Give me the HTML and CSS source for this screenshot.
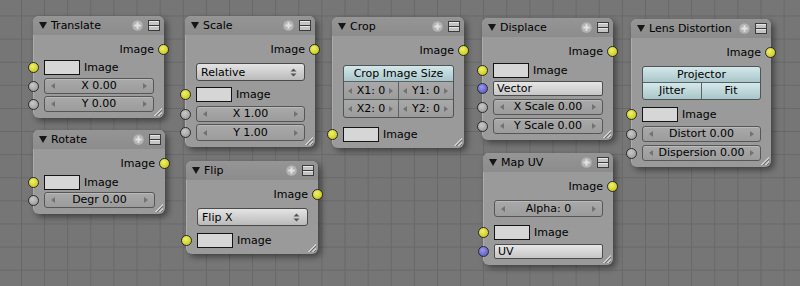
FILE: index.html
```html
<!DOCTYPE html>
<html lang="en">
<head>
    <meta charset="UTF-8">
    <title>Distort Nodes</title>
    <link rel="stylesheet" href="styles.css">
</head>
<body>
<div class="canvas">

    <!-- Translate -->
    <div class="node n-translate">
        <div class="node-head">
            <span class="tri"></span><span class="node-title">Translate</span>
            <span class="head-icons">
                <svg width="11" height="11" viewBox="0 0 11 11"><circle cx="5.5" cy="5.5" r="5.3" fill="#b3b3b3"/><path d="M5.5 2.3v6.4M2.3 5.5h6.4" stroke="#e2e2e2" stroke-width="2"/></svg>
                <svg width="12" height="11" viewBox="0 0 12 11"><rect x=".5" y=".5" width="11" height="10" fill="#c4c4c4" stroke="#3c3c3c"/><path d="M1 5.5h10" stroke="#3c3c3c"/><path d="M1 1.5h10M1 6.5h10" stroke="#e6e6e6"/></svg>
            </span>
        </div>
        <div class="node-body">
            <div class="row out">Image<i class="sock yel"></i></div>
            <div class="row in"><i class="sock yel"></i><span class="img-box"></span>Image</div>
            <div class="row in"><i class="sock gry"></i><div class="num spin">X 0.00</div></div>
            <div class="row in mt2"><i class="sock gry"></i><div class="num spin">Y 0.00</div></div>
        </div>
    </div>

    <!-- Rotate -->
    <div class="node n-rotate">
        <div class="node-head">
            <span class="tri"></span><span class="node-title">Rotate</span>
            <span class="head-icons">
                <svg width="11" height="11" viewBox="0 0 11 11"><circle cx="5.5" cy="5.5" r="5.3" fill="#b3b3b3"/><path d="M5.5 2.3v6.4M2.3 5.5h6.4" stroke="#e2e2e2" stroke-width="2"/></svg>
                <svg width="12" height="11" viewBox="0 0 12 11"><rect x=".5" y=".5" width="11" height="10" fill="#c4c4c4" stroke="#3c3c3c"/><path d="M1 5.5h10" stroke="#3c3c3c"/><path d="M1 1.5h10M1 6.5h10" stroke="#e6e6e6"/></svg>
            </span>
        </div>
        <div class="node-body">
            <div class="row out">Image<i class="sock yel"></i></div>
            <div class="row in mt4"><i class="sock yel"></i><span class="img-box"></span>Image</div>
            <div class="row in mt2"><i class="sock gry"></i><div class="num spin">Degr 0.00</div></div>
        </div>
    </div>

    <!-- Scale -->
    <div class="node n-scale">
        <div class="node-head">
            <span class="tri"></span><span class="node-title">Scale</span>
            <span class="head-icons">
                <svg width="11" height="11" viewBox="0 0 11 11"><circle cx="5.5" cy="5.5" r="5.3" fill="#b3b3b3"/><path d="M5.5 2.3v6.4M2.3 5.5h6.4" stroke="#e2e2e2" stroke-width="2"/></svg>
                <svg width="12" height="11" viewBox="0 0 12 11"><rect x=".5" y=".5" width="11" height="10" fill="#c4c4c4" stroke="#3c3c3c"/><path d="M1 5.5h10" stroke="#3c3c3c"/><path d="M1 1.5h10M1 6.5h10" stroke="#e6e6e6"/></svg>
            </span>
        </div>
        <div class="node-body">
            <div class="row out">Image<i class="sock yel"></i></div>
            <div class="row mt6">
                <div class="pick">Relative
                    <svg width="7" height="9" viewBox="0 0 7 9"><path d="M3.5 .5L6.5 3.5H.5zM3.5 8.5L.5 5.5h6z" fill="#555"/></svg>
                </div>
            </div>
            <div class="row in mt6"><i class="sock yel"></i><span class="img-box"></span>Image</div>
            <div class="row in mt4"><i class="sock gry"></i><div class="num spin">X 1.00</div></div>
            <div class="row in mt2"><i class="sock gry"></i><div class="num spin tall">Y 1.00</div></div>
        </div>
    </div>

    <!-- Flip -->
    <div class="node n-flip">
        <div class="node-head">
            <span class="tri"></span><span class="node-title">Flip</span>
            <span class="head-icons">
                <svg width="11" height="11" viewBox="0 0 11 11"><circle cx="5.5" cy="5.5" r="5.3" fill="#b3b3b3"/><path d="M5.5 2.3v6.4M2.3 5.5h6.4" stroke="#e2e2e2" stroke-width="2"/></svg>
                <svg width="12" height="11" viewBox="0 0 12 11"><rect x=".5" y=".5" width="11" height="10" fill="#c4c4c4" stroke="#3c3c3c"/><path d="M1 5.5h10" stroke="#3c3c3c"/><path d="M1 1.5h10M1 6.5h10" stroke="#e6e6e6"/></svg>
            </span>
        </div>
        <div class="node-body">
            <div class="row out">Image<i class="sock yel"></i></div>
            <div class="row mt6">
                <div class="pick">Flip X
                    <svg width="7" height="9" viewBox="0 0 7 9"><path d="M3.5 .5L6.5 3.5H.5zM3.5 8.5L.5 5.5h6z" fill="#555"/></svg>
                </div>
            </div>
            <div class="row in mt7"><i class="sock yel"></i><span class="img-box"></span>Image</div>
        </div>
    </div>

    <!-- Crop -->
    <div class="node n-crop">
        <div class="node-head">
            <span class="tri"></span><span class="node-title">Crop</span>
            <span class="head-icons">
                <svg width="11" height="11" viewBox="0 0 11 11"><circle cx="5.5" cy="5.5" r="5.3" fill="#b3b3b3"/><path d="M5.5 2.3v6.4M2.3 5.5h6.4" stroke="#e2e2e2" stroke-width="2"/></svg>
                <svg width="12" height="11" viewBox="0 0 12 11"><rect x=".5" y=".5" width="11" height="10" fill="#c4c4c4" stroke="#3c3c3c"/><path d="M1 5.5h10" stroke="#3c3c3c"/><path d="M1 1.5h10M1 6.5h10" stroke="#e6e6e6"/></svg>
            </span>
        </div>
        <div class="node-body">
            <div class="row out">Image<i class="sock yel"></i></div>
            <div class="row mt7">
                <div class="block">
                    <div class="tog wide">Crop Image Size</div>
                    <div class="cell spin">X1: 0</div>
                    <div class="cell spin">Y1: 0</div>
                    <div class="cell spin">X2: 0</div>
                    <div class="cell spin">Y2: 0</div>
                </div>
            </div>
            <div class="row in mt9"><i class="sock yel"></i><span class="img-box"></span>Image</div>
        </div>
    </div>

    <!-- Displace -->
    <div class="node n-displace">
        <div class="node-head">
            <span class="tri"></span><span class="node-title">Displace</span>
            <span class="head-icons">
                <svg width="11" height="11" viewBox="0 0 11 11"><circle cx="5.5" cy="5.5" r="5.3" fill="#b3b3b3"/><path d="M5.5 2.3v6.4M2.3 5.5h6.4" stroke="#e2e2e2" stroke-width="2"/></svg>
                <svg width="12" height="11" viewBox="0 0 12 11"><rect x=".5" y=".5" width="11" height="10" fill="#c4c4c4" stroke="#3c3c3c"/><path d="M1 5.5h10" stroke="#3c3c3c"/><path d="M1 1.5h10M1 6.5h10" stroke="#e6e6e6"/></svg>
            </span>
        </div>
        <div class="node-body">
            <div class="row out">Image<i class="sock yel"></i></div>
            <div class="row in mt4"><i class="sock yel"></i><span class="img-box"></span>Image</div>
            <div class="row in"><i class="sock blu"></i><div class="push">Vector</div></div>
            <div class="row in"><i class="sock gry"></i><div class="num spin">X Scale 0.00</div></div>
            <div class="row in"><i class="sock gry"></i><div class="num spin">Y Scale 0.00</div></div>
        </div>
    </div>

    <!-- Map UV -->
    <div class="node n-mapuv">
        <div class="node-head">
            <span class="tri"></span><span class="node-title">Map UV</span>
            <span class="head-icons">
                <svg width="11" height="11" viewBox="0 0 11 11"><circle cx="5.5" cy="5.5" r="5.3" fill="#b3b3b3"/><path d="M5.5 2.3v6.4M2.3 5.5h6.4" stroke="#e2e2e2" stroke-width="2"/></svg>
                <svg width="12" height="11" viewBox="0 0 12 11"><rect x=".5" y=".5" width="11" height="10" fill="#c4c4c4" stroke="#3c3c3c"/><path d="M1 5.5h10" stroke="#3c3c3c"/><path d="M1 1.5h10M1 6.5h10" stroke="#e6e6e6"/></svg>
            </span>
        </div>
        <div class="node-body">
            <div class="row out">Image<i class="sock yel"></i></div>
            <div class="row mt6"><div class="num spin tall">Alpha: 0</div></div>
            <div class="row in mt8"><i class="sock yel"></i><span class="img-box"></span>Image</div>
            <div class="row in mt4"><i class="sock blu"></i><div class="push">UV</div></div>
        </div>
    </div>

    <!-- Lens Distortion -->
    <div class="node n-lens">
        <div class="node-head">
            <span class="tri"></span><span class="node-title">Lens Distortion</span>
            <span class="head-icons">
                <svg width="11" height="11" viewBox="0 0 11 11"><circle cx="5.5" cy="5.5" r="5.3" fill="#b3b3b3"/><path d="M5.5 2.3v6.4M2.3 5.5h6.4" stroke="#e2e2e2" stroke-width="2"/></svg>
                <svg width="12" height="11" viewBox="0 0 12 11"><rect x=".5" y=".5" width="11" height="10" fill="#c4c4c4" stroke="#3c3c3c"/><path d="M1 5.5h10" stroke="#3c3c3c"/><path d="M1 1.5h10M1 6.5h10" stroke="#e6e6e6"/></svg>
            </span>
        </div>
        <div class="node-body">
            <div class="row out">Image<i class="sock yel"></i></div>
            <div class="row mt6">
                <div class="block">
                    <div class="tog wide">Projector</div>
                    <div class="tog">Jitter</div>
                    <div class="tog">Fit</div>
                </div>
            </div>
            <div class="row in mt7"><i class="sock yel"></i><span class="img-box"></span>Image</div>
            <div class="row in mt4"><i class="sock gry"></i><div class="num spin">Distort 0.00</div></div>
            <div class="row in"><i class="sock gry"></i><div class="num spin">Dispersion 0.00</div></div>
        </div>
    </div>

</div>
</body>
</html>
```

FILE: styles.css
```css
body {
    margin: 0;
    font-family: "DejaVu Sans", "Bitstream Vera Sans", sans-serif;
    font-size: 11px;
    line-height: 13px;
    color: #000;
}

.canvas {
    position: relative;
    width: 800px;
    height: 286px;
    overflow: hidden;
    background-color: #767676;
    background-image:
        linear-gradient(to right, #686868 1px, transparent 1px),
        linear-gradient(to bottom, #686868 1px, transparent 1px);
    background-size: 23.12px 23.12px;
    background-position: 21px 15.5px;
}

/* nodes sit on a free canvas, so they keep their own coordinates */
.node {
    position: absolute;
    background: #9a9a9a;
    border-radius: 6px;
    box-shadow: 3px 3px 6px rgba(0, 0, 0, 0.45), inset 1px 1px 0 rgba(255, 255, 255, 0.18);
}

.node::after {
    content: "";
    position: absolute;
    right: 2px;
    bottom: 2px;
    width: 8px;
    height: 8px;
    background: linear-gradient(135deg,
        transparent 50%, #cdcdcd 50%, #cdcdcd 58%, #6c6c6c 58%, #6c6c6c 66%,
        transparent 66%, transparent 75%, #cdcdcd 75%, #cdcdcd 83%, #6c6c6c 83%, #6c6c6c 91%,
        transparent 91%);
}

.n-translate { left: 33px; top: 16px; width: 131px; }
.n-rotate { left: 33px; top: 130px; width: 132px; }
.n-scale { left: 185px; top: 16px; width: 130px; }
.n-flip { left: 186px; top: 161px; width: 132px; }
.n-crop { left: 332px; top: 17px; width: 132px; }
.n-displace { left: 482px; top: 18px; width: 131px; }
.n-mapuv { left: 483px; top: 153px; width: 130px; }
.n-lens { left: 631px; top: 19px; width: 140px; }

.node-head {
    height: 19px;
    display: flex;
    align-items: center;
    padding: 0 4px 0 6px;
    border-radius: 6px 6px 0 0;
    background: linear-gradient(#959595, #8c8c8c);
}

.tri {
    width: 0;
    height: 0;
    border-left: 4px solid transparent;
    border-right: 4px solid transparent;
    border-top: 7px solid #161616;
}

.node-title {
    margin-left: 4px;
}

.head-icons {
    margin-left: auto;
    display: flex;
    align-items: center;
    gap: 5px;
}

.head-icons svg {
    display: block;
}

.node-body {
    padding: 6px 10px 6px 11px;
}

.row {
    position: relative;
    display: flex;
    align-items: center;
    margin-top: 3px;
}

.row.out {
    justify-content: flex-end;
    height: 16px;
    margin-top: 0;
}

.mt2 { margin-top: 2px; }
.mt4 { margin-top: 4px; }
.mt6 { margin-top: 6px; }
.mt7 { margin-top: 7px; }
.mt8 { margin-top: 8px; }
.mt9 { margin-top: 9px; }

/* sockets */
.sock {
    position: absolute;
    top: 50%;
    width: 9px;
    height: 9px;
    margin-top: -5.5px;
    border: 1px solid #2a2a2a;
    border-radius: 50%;
}

.in > .sock { left: -16.5px; }
.out > .sock { right: -15px; }

.yel { background: radial-gradient(circle at 40% 35%, #f0f070, #cfcf24 70%); }
.gry { background: radial-gradient(circle at 40% 35%, #c8c8c8, #a2a2a2 70%); }
.blu { background: radial-gradient(circle at 40% 35%, #9a9af0, #6262cc 70%); }

.img-box {
    width: 34px;
    height: 13px;
    margin-right: 4px;
    border: 1px solid #141414;
    background: #d6d6d6;
}

/* number fields with the little arrows */
.num {
    flex: 1;
    height: 14px;
    line-height: 14px;
    border: 1px solid #575757;
    border-radius: 3px;
    background: linear-gradient(#a9a9a9, #9c9c9c);
    box-shadow: inset 0 1px 0 rgba(255, 255, 255, 0.2);
}

.num.tall {
    height: 15px;
    line-height: 15px;
}

.spin {
    position: relative;
    text-align: center;
}

.spin::before,
.spin::after {
    content: "";
    position: absolute;
    top: 50%;
    margin-top: -3px;
    border-top: 3px solid transparent;
    border-bottom: 3px solid transparent;
}

.spin::before {
    left: 6px;
    border-right: 4px solid #727272;
}

.spin::after {
    right: 6px;
    border-left: 4px solid #727272;
}

.pick {
    flex: 1;
    height: 16px;
    display: flex;
    align-items: center;
    justify-content: space-between;
    padding: 0 7px 0 4px;
    border: 1px solid #4a4a4a;
    border-radius: 3px;
    background: linear-gradient(#e4e4e4, #bababa);
}

.pick svg {
    display: block;
}

.push {
    flex: 1;
    height: 13px;
    line-height: 13px;
    padding-left: 3px;
    border: 1px solid #4c4c4c;
    border-radius: 2px;
    background: linear-gradient(#e6e6e6, #c6c6c6);
}

/* grouped buttons: crop and lens options */
.block {
    flex: 1;
    display: grid;
    grid-template-columns: 1fr 1fr;
    gap: 1px;
    border: 1px solid #4e5556;
    border-radius: 3px;
    overflow: hidden;
    background: #5b6263;
}

.tog {
    height: 16px;
    line-height: 16px;
    text-align: center;
    background: linear-gradient(#d4e8ea, #a9c6ca);
}

.tog.wide {
    grid-column: span 2;
    height: 15px;
    line-height: 15px;
}

.cell {
    height: 17px;
    line-height: 17px;
    background: linear-gradient(#a9a9a9, #9c9c9c);
}

.cell.spin::before { left: 4px; }
.cell.spin::after { right: 5px; }
```
